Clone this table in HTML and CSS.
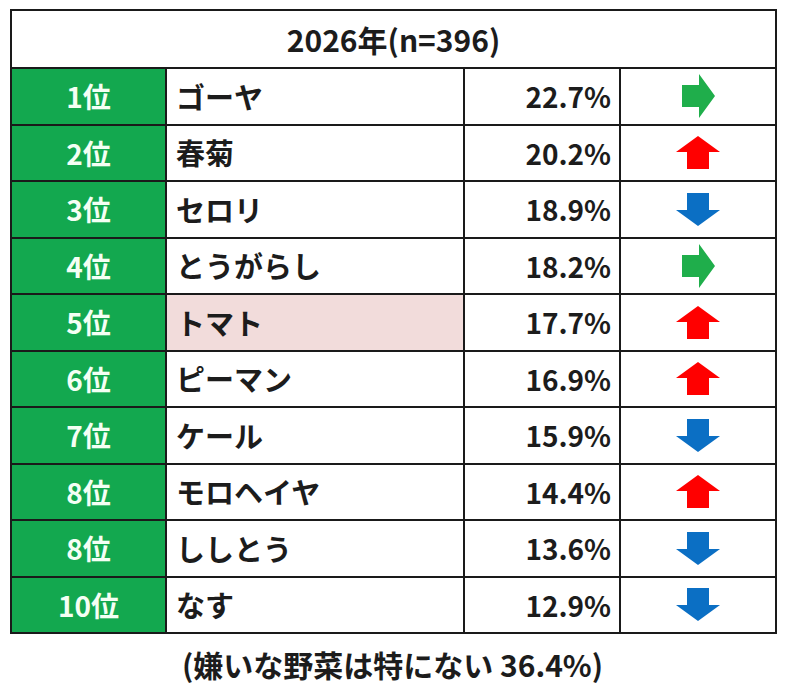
FILE: index.html
```html
<!DOCTYPE html>
<html lang="ja">
<head>
<meta charset="utf-8">
<title>嫌いな野菜ランキング 2026年</title>
<link rel="stylesheet" href="styles.css">
</head>
<body>
<main class="page">
  <table class="ranking">
    <colgroup>
      <col class="c-rank"><col class="c-name"><col class="c-pct"><col class="c-trend">
    </colgroup>
    <thead>
      <tr class="title-row"><th colspan="4">2026年(n=396)</th></tr>
    </thead>
    <tbody>
      <tr><td class="rank">1位</td><td class="name">ゴーヤ</td><td class="pct">22.7%</td><td class="trend"><svg class="arr-r" viewBox="0 0 33 44"><path d="M0 11H17V0L33 22L17 44V33H0Z"/></svg></td></tr>
      <tr><td class="rank">2位</td><td class="name">春菊</td><td class="pct">20.2%</td><td class="trend"><svg class="arr-u" viewBox="0 0 44 33"><path d="M22 0L44 16H33V33H11V16H0Z"/></svg></td></tr>
      <tr><td class="rank">3位</td><td class="name">セロリ</td><td class="pct">18.9%</td><td class="trend"><svg class="arr-d" viewBox="0 0 44 33"><path d="M11 0H33V17H44L22 33L0 17H11Z"/></svg></td></tr>
      <tr><td class="rank">4位</td><td class="name">とうがらし</td><td class="pct">18.2%</td><td class="trend"><svg class="arr-r" viewBox="0 0 33 44"><path d="M0 11H17V0L33 22L17 44V33H0Z"/></svg></td></tr>
      <tr><td class="rank">5位</td><td class="name hl">トマト</td><td class="pct">17.7%</td><td class="trend"><svg class="arr-u" viewBox="0 0 44 33"><path d="M22 0L44 16H33V33H11V16H0Z"/></svg></td></tr>
      <tr><td class="rank">6位</td><td class="name">ピーマン</td><td class="pct">16.9%</td><td class="trend"><svg class="arr-u" viewBox="0 0 44 33"><path d="M22 0L44 16H33V33H11V16H0Z"/></svg></td></tr>
      <tr><td class="rank">7位</td><td class="name">ケール</td><td class="pct">15.9%</td><td class="trend"><svg class="arr-d" viewBox="0 0 44 33"><path d="M11 0H33V17H44L22 33L0 17H11Z"/></svg></td></tr>
      <tr><td class="rank">8位</td><td class="name">モロヘイヤ</td><td class="pct">14.4%</td><td class="trend"><svg class="arr-u" viewBox="0 0 44 33"><path d="M22 0L44 16H33V33H11V16H0Z"/></svg></td></tr>
      <tr><td class="rank">8位</td><td class="name">ししとう</td><td class="pct">13.6%</td><td class="trend"><svg class="arr-d" viewBox="0 0 44 33"><path d="M11 0H33V17H44L22 33L0 17H11Z"/></svg></td></tr>
      <tr><td class="rank">10位</td><td class="name">なす</td><td class="pct">12.9%</td><td class="trend"><svg class="arr-d" viewBox="0 0 44 33"><path d="M11 0H33V17H44L22 33L0 17H11Z"/></svg></td></tr>
    </tbody>
  </table>
  <p class="note">(嫌いな野菜は特にない 36.4%)</p>
</main>
</body>
</html>
```
FILE: styles.css
```css
html, body {
  margin: 0;
  padding: 0;
  background: #ffffff;
}
.page {
  padding: 9px 0 0 10px;
  font-family: "Noto Sans CJK JP", "Noto Sans", sans-serif;
  font-weight: 700;
  color: #1c1c1c;
}
.ranking {
  border-collapse: collapse;
  width: 765px;
  table-layout: fixed;
}
.c-rank { width: 155px; }
.c-name { width: 298px; }
.c-pct { width: 156px; }
.c-trend { width: 156px; }
.ranking th,
.ranking td {
  border: 2px solid #1a1a1a;
  padding: 0;
  font-size: 28px;
  line-height: 1;
  vertical-align: middle;
}
.title-row th {
  height: 56px;
  text-align: center;
  font-weight: 700;
  font-size: 30px;
}
.ranking tbody tr {
  height: 56.5px;
}
.rank {
  background: #13a84f;
  color: #f4fff4;
  text-align: center;
}
.name {
  text-align: left;
  padding-left: 9px !important;
  font-size: 29px !important;
}
.name.hl {
  background: #f2dcdb;
}
.pct {
  text-align: right;
  padding-right: 8px !important;
}
.trend {
  text-align: center;
}
.trend svg {
  display: block;
  margin: 0 auto;
}
.arr-r { width: 33px; height: 44px; fill: #1fae4b; }
.arr-u { width: 44px; height: 33px; fill: #ff0000; }
.arr-d { width: 44px; height: 33px; fill: #0b6fc4; }
.note {
  width: 765px;
  margin: 10px 0 0;
  text-align: center;
  font-size: 30px;
  line-height: 40px;
}
```
